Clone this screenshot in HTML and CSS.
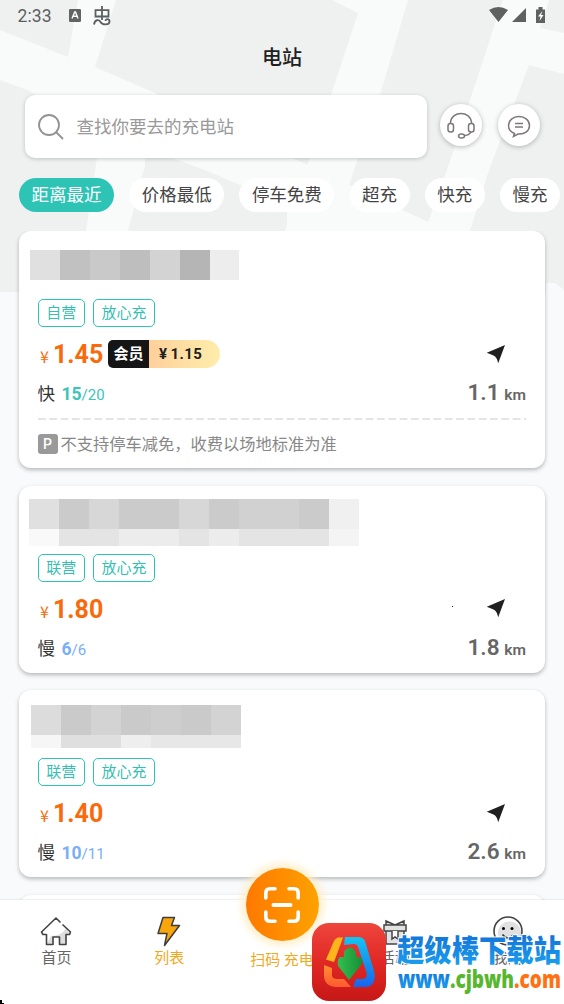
FILE: index.html
```html
<!DOCTYPE html>
<html lang="zh-CN">
<head>
<meta charset="utf-8">
<title>电站</title>
<link rel="stylesheet" href="styles.css">
</head>
<body>
<svg width="0" height="0" class="defs">
  <symbol id="nav-arrow" viewBox="0 0 20 20"><path d="M.800 8.700 19 1 12.200 19.200Q11 13 7.500 11.500Z" fill="#202020"/></symbol>
</svg>
<div class="app">
  <svg class="map" width="564" height="292" viewBox="0 0 564 292">
    <path fill="#eff1f1" d="M0 0H564V290L555 283H546V292H0Z"/>
    <g fill="#f9fbfb">
      <path d="M0 30 68 57 78 0H116L95 67 155 93 428 222 424 240H287V205L205 170 145 148V165L128 231H86L97 158 100 128 27 90 0 80Z"/>
      <path d="M332 0H408L380 95 354 170 335 231H285L331 95 358 13Z"/>
      <path d="M503 0H549L540 28 564 33V74L529 65 489 170 470 231H410L428 222 447 170 493 30Z"/>
    </g>
  </svg>
  <header class="status">
    <span class="clock">2:33</span>
    <svg class="a-badge" width="12" height="13" viewBox="0 0 12 13"><rect width="12" height="13" rx="1.2" fill="#626464"/><path d="M3 9.5 5.7 3H6.5L9 9.5M4.2 7.2H7.8" fill="none" stroke="#fff" stroke-width="1.4"/></svg>
    <svg class="glyph" width="19" height="20" viewBox="0 0 19 20" fill="none" stroke="#5c5f5f" stroke-width="1.8"><path d="M2.500 4.200H15.500V10.500H2.500ZM9 0V14M1 18.500C2 13 6 13.500 7.500 16 9.500 19.500 16.500 19 16.500 15.500 16.500 12.500 12.500 12.500 12.500 15"/></svg>
    <div class="signals">
      <svg width="58" height="18" viewBox="0 0 58 18" fill="#5f6161"><path d="M0 4Q9.500-2 19 4L9.500 16ZM37 2V16H23ZM47 3.500H49.500V1H53.500V3.500H56V17H47Z"/><path d="M53.500 5 49 10.500H51.500L50.500 15 54.500 9H52Z" fill="#fff"/></svg>
    </div>
  </header>
  <h1 class="title">电站</h1>
  <div class="search-row">
    <div class="search">
      <svg width="28" height="28" viewBox="0 0 28 28" fill="none" stroke="#929292" stroke-width="1.800"><circle cx="12" cy="12" r="10"/><path d="M19 19 26 26"/></svg>
      <span>查找你要去的充电站</span>
    </div>
    <div class="round"><svg width="28" height="28" viewBox="0 0 28 28" fill="none" stroke="#7d7777" stroke-width="1.500"><path d="M3.500 13V11C5-.500 23-.500 24.500 11V13M24 21Q22 24.500 17 24.500"/><rect x="1" y="12.500" width="5.500" height="8.500" rx="2.500"/><rect x="21.500" y="12.500" width="5.500" height="8.500" rx="2.500"/><ellipse cx="14.500" cy="25" rx="3" ry="2"/></svg></div>
    <div class="round"><svg width="28" height="28" viewBox="0 0 28 28" fill="none" stroke="#7d7777" stroke-width="1.500"><path d="M9.500 22.500 8.500 25.500 13 23C20 23.500 24.500 19.500 24.500 14.500S20 5.500 14 5.500 3.500 9.500 3.500 14.500C3.500 18 5.500 21 9.500 22.500ZM10 12.500H18M10 16H18"/></svg></div>
  </div>
  <div class="filters">
    <span class="chip on">距离最近</span><span class="chip">价格最低</span><span class="chip">停车免费</span><span class="chip">超充</span><span class="chip">快充</span><span class="chip">慢充</span>
  </div>
  <main class="list">
    <article class="card">
      <div class="name n1"><svg width="209" height="30" shape-rendering="crispEdges"><path fill="#e0e0e0" d="M0 0h30v30H0z"/><path fill="#c1c1c1" d="M30 0h30v30H30z"/><path fill="#c9c9c9" d="M60 0h30v30H60z"/><path fill="#bebebe" d="M90 0h30v30H90z"/><path fill="#d3d3d3" d="M120 0h30v30h-30z"/><path fill="#b5b5b5" d="M150 0h30v30h-30z"/><path fill="#ededed" d="M180 0h29v30h-29z"/></svg></div>
      <div class="tags"><span>自营</span><span>放心充</span></div>
      <div class="price-row"><span class="yen">¥</span><b class="price">1.45</b><span class="vip"><b>会员</b><strong><i>¥</i>1.15</strong></span><svg class="go" width="20" height="20"><use href="#nav-arrow"/></svg></div>
      <div class="stat"><span class="kind">快</span><span class="count fast"><b>15</b>/20</span><span class="dist"><b>1.1</b> km</span></div>
      <svg class="dash" width="488" height="2"><path d="M0 1H488" stroke="#dbdbdb" stroke-width="1.500" stroke-dasharray="7.800 3.500"/></svg>
      <div class="note"><i>P</i><span>不支持停车减免，收费以场地标准为准</span></div>
    </article>
    <article class="card">
      <div class="name n2"><svg width="330" height="47" shape-rendering="crispEdges"><path fill="#e0e0e0" d="M0 0h30v30H0z"/><path fill="#cbcbcb" d="M30 0h270v30H30z"/><path fill="#d7d7d7" d="M60 0h30v30H60zM150 0h30v30h-30z"/><path fill="#d1d1d1" d="M210 0h60v30h-60z"/><path fill="#f0f0f0" d="M300 0h30v30h-30z"/><path fill="#f9f9f9" d="M0 30h30v17H0z"/><path fill="#e4e4e4" d="M30 30h270v17H30z"/><path fill="#ececec" d="M90 30h60v17H90zM180 30h30v17h-30z"/><path fill="#f4f4f4" d="M300 30h30v17h-30z"/></svg></div>
      <div class="tags"><span>联营</span><span>放心充</span></div>
      <div class="price-row"><span class="yen">¥</span><b class="price">1.80</b><i class="speck"></i><svg class="go" width="20" height="20"><use href="#nav-arrow"/></svg></div>
      <div class="stat"><span class="kind">慢</span><span class="count slow"><b>6</b>/6</span><span class="dist"><b>1.8</b> km</span></div>
    </article>
    <article class="card">
      <div class="name n3"><svg width="210" height="43" shape-rendering="crispEdges"><path fill="#dcdcdc" d="M0 0h30v30H0z"/><path fill="#cacaca" d="M30 0h180v30H30z"/><path fill="#d3d3d3" d="M60 0h30v30H60zM180 0h30v30h-30z"/><path fill="#cecece" d="M120 0h30v30h-30z"/><path fill="#f6f6f6" d="M0 30h30v13H0z"/><path fill="#dfdfdf" d="M30 30h60v13H30z"/><path fill="#eee" d="M90 30h30v13H90z"/><path fill="#e7e7e7" d="M120 30h90v13h-90z"/></svg></div>
      <div class="tags"><span>联营</span><span>放心充</span></div>
      <div class="price-row"><span class="yen">¥</span><b class="price">1.40</b><svg class="go" width="20" height="20"><use href="#nav-arrow"/></svg></div>
      <div class="stat"><span class="kind">慢</span><span class="count slow"><b>10</b>/11</span><span class="dist"><b>2.6</b> km</span></div>
    </article>
    <article class="card"></article>
  </main>
  <nav class="tabs">
    <div class="tab"><svg width="32" height="32" viewBox="0 0 32 32"><path d="M16 2 30.500 16 28 19H26V28.500H19.500V21H13.500V28.500H6.500V19H3.500L1.500 16Z" fill="#fff"/><path d="M26 12Q22 20 11 20L6.500 28.500H13.500V21H19.500V28.500H26V18.500H30Z" fill="#dedede"/><path d="M20.500 6.500 16 2 1.500 16 3 18.500H6.500V28.500H13V21H19.500V28.500H26V18.500H29.500L30.500 16 22.500 8.500" fill="none" stroke="#444" stroke-width="1.600" stroke-linejoin="round"/></svg><span>首页</span></div>
    <div class="tab on"><svg width="32" height="32" viewBox="0 0 32 32"><path d="M10 1.500H21.500L18.500 9.500H26.500L11.500 29.500 14 17.500H5Z" fill="#f9a50c" stroke="#3d3d3d" stroke-width="1.500" stroke-linejoin="round"/></svg><span>列表</span></div>
    <div class="tab scan"><div class="fab"><svg width="40" height="40" viewBox="0 0 40 40" fill="none" stroke="#fff" stroke-width="3.600" stroke-linecap="round"><path d="M3.800 13V8Q3.800 3.800 8 3.800H13M27 3.800H32Q36.200 3.800 36.200 8V13M36.200 27V32Q36.200 36.200 32 36.200H27M13 36.200H8Q3.800 36.200 3.800 32V27"/><path d="M11.500 20H28.500" stroke-width="4"/></svg></div><span>扫码 充电</span></div>
    <div class="tab"><svg width="32" height="32" viewBox="0 0 32 32" fill="#e2e2e2" stroke="#444" stroke-width="1.500"><path d="M7 15H25V28H7ZM5 9H27V15H5ZM16 9 7 5V9ZM16 9 25 5V9Z"/><path d="M13 15V23L16 21 19 23V15" fill="#fff"/></svg><span>活动</span></div>
    <div class="tab"><svg width="32" height="32" viewBox="0 0 32 32"><circle cx="16" cy="15" r="14" fill="#fff" stroke="#444" stroke-width="1.600"/><circle cx="17.500" cy="17" r="11.500" fill="#e1e1e1"/><path d="M10.500 18.500Q16 25.500 21.500 18.500" fill="none" stroke="#333" stroke-width="1.500"/><circle cx="11.500" cy="12.500" r="1.500"/><circle cx="20" cy="12.500" r="1.500"/></svg><span>我的</span></div>
  </nav>
  <div class="watermark">
    <svg width="74" height="78" viewBox="0 0 74 78">
      <defs><linearGradient id="red" x2="0" y2="1"><stop stop-color="#ee463c"/><stop offset=".5" stop-color="#e02824"/><stop offset="1" stop-color="#c71717"/></linearGradient><linearGradient id="blue" x2="0" y2="1"><stop stop-color="#13c5f1"/><stop offset="1" stop-color="#1764ec"/></linearGradient><linearGradient id="org" x2="0" y2="1"><stop stop-color="#ff8e32"/><stop offset="1" stop-color="#ff5a2f"/></linearGradient><linearGradient id="grn"><stop stop-color="#35bd4e"/><stop offset="1" stop-color="#159139"/></linearGradient></defs>
      <rect width="74" height="78" rx="17" fill="url(#red)"/>
      <path d="M26 14.500H31L22 39 14 36.500 22 18Q23.500 15 26 14.500Z" fill="#ffb51b"/>
      <path d="M33 14H46Q51 14 53 18L62 48Q65 60 56 64H41L44 56H52Q56 54 54 48L46 24Q45 21 42 21L32 22Z" fill="url(#blue)"/>
      <path d="M12 42 20 45 20 53Q21 56 25 56H32L39 64H23Q13 63 12 54Z" fill="url(#org)"/>
      <path d="M32 29Q38 20 44 29V34H48Q52 37 49 42L37 57 26 43Q25 36 28 34H32Z" fill="url(#grn)"/>
    </svg>
    <svg class="wm-text" width="178" height="78">
      <defs><linearGradient id="sky" x2="0" y2="1"><stop offset=".2" stop-color="#1474d8"/><stop offset="1" stop-color="#1ba5f0"/></linearGradient></defs>
      <text class="wm-name" x="11" y="38" textLength="164" lengthAdjust="spacingAndGlyphs">超级棒下载站</text>
      <text class="wm-url" x="12" y="65" textLength="163" lengthAdjust="spacingAndGlyphs">www<tspan class="g">.cjbwh</tspan><tspan class="o">.com</tspan></text>
    </svg>
  </div>
  <svg class="corner" width="4" height="4"><path d="M0 0H2V3H4V4H0Z"/></svg>
</div>
</body>
</html>
```
FILE: styles.css
```css
* { box-sizing: border-box; }
body { margin: 0; font-family: Roboto, "Noto Sans CJK SC", sans-serif; }
.defs { position: absolute; }
.app { position: relative; isolation: isolate; width: 564px; height: 1004px; overflow: hidden; background: #f8fafc; display: flex; flex-direction: column; }
.map { position: absolute; z-index: -1; top: 0; left: 0; }
.status { height: 32px; flex: none; display: flex; align-items: center; padding: 0 17px 0 17.5px; }
.clock { width: 51px; font-size: 17.5px; color: #5c5f5f; letter-spacing: .1px; }
.a-badge { margin-top: -2px; }
.glyph { margin-left: 12px; margin-top: -1px; }
.signals { margin-left: auto; display: flex; margin-top: -2px; }
.title { margin: 0; height: 63px; flex: none; line-height: 53px; text-align: center; font-size: 20px; font-weight: 500; color: #202020; }
.search-row { height: 63px; flex: none; display: flex; align-items: center; gap: 16px; padding: 0 24px 0 25px; }
.search { flex: 1; height: 63px; border-radius: 10px; background: #fff; box-shadow: 0 1px 4px #0003; display: flex; align-items: center; gap: 11.5px; padding-left: 12px; margin-right: -3px; font-size: 17.5px; line-height: 24px; color: #999; }
.search span { margin-top: 0; }
.round { width: 42px; height: 42px; border-radius: 50%; background: #fff; box-shadow: 0 1px 5px #0004; display: grid; place-items: center; margin-top: -3px; flex: none; }
.filters { height: 34px; flex: none; margin: 20px 0 19px 19px; display: flex; gap: 15.2px; }
.chip { flex: none; padding: 0 12.5px; border-radius: 17px; background: #fff; color: #444; font-size: 17.5px; line-height: 34px; white-space: nowrap; }
.chip.on { background: #2dc4b6; color: #fff; }
.list { flex: 1; min-height: 0; overflow: hidden; display: flex; flex-direction: column; gap: 17.500px; padding: 0 19px 0; }
.card { flex: none; height: 187px; padding: 0 19px; border-radius: 12px; background: #fff; box-shadow: 0 2px 4px #0004; }
.card:first-child { height: 237px; }
.name { height: 68px; margin: 0 -19px; }
.name svg { display: block; }
.n1 { padding: 19px 0 0 11px; }
.n2 { padding: 13px 0 0 10px; }
.n3 { padding: 15px 0 0 12px; }
.tags { display: flex; gap: 8px; height: 28px; margin-left: -.5px; }
.tags span { border: 1.5px solid #2dc4b6; border-radius: 5px; padding: 0 7.7px; line-height: 26px; font-size: 15px; color: #36bfb0; }
.price-row { height: 54px; display: flex; align-items: center; color: #f96a0b; position: relative; }
.yen { width: 15px; padding-left: 2px; font: 16px "Noto Sans CJK SC", sans-serif; margin-top: 4px; }
.price { width: 55px; font-size: 25px; line-height: 28px; margin-top: 2px; }
.vip { height: 28px; display: flex; border-radius: 5px 14px 14px 5px; overflow: hidden; color: #fff; font-size: 15px; line-height: 28px; }
.vip b { width: 41px; text-align: center; background: #151515; }
.vip strong { width: 71px; padding-left: 10px; background: linear-gradient(90deg, #ffd09c, #ffedaa); color: #202020; letter-spacing: .4px; white-space: nowrap; line-height: 28px; }
.vip i { font-style: normal; margin-right: 3px; }
.go { margin-left: auto; margin-right: 20px; margin-top: -1px; }
.speck { position: absolute; left: 414px; top: 24px; width: 1px; height: 1px; background: #600; }
.stat { height: 27px; display: flex; align-items: baseline; line-height: 23px; margin-left: -.5px; }
.kind { width: 24px; font-size: 17.5px; color: #333; }
.count { font-size: 15px; }
.count b { font-size: 17.500px; }
.fast { color: #3cc4b8; }
.slow { color: #7aaef5; }
.dist { margin-left: auto; font-size: 15.5px; font-weight: 600; color: #666; }
.dist b { font-size: 22.5px; font-weight: 600; margin-right: 1px; }
.dash { display: block; margin-top: 10px; }
.note { height: 20px; margin-top: 14px; display: flex; align-items: center; gap: 3px; margin-left: -.5px; color: #888; font-size: 16.250px; line-height: 22px; white-space: nowrap; }
.note span { margin-top: 1px; }
.note i { width: 20px; height: 20px; border-radius: 3px; background: #999; color: #fff; font: 500 14px/21px Roboto, sans-serif; text-align: center; }
.tabs { height: 104px; flex: none; background: #fff; display: flex; box-shadow: 0 -1px 1px #0000000d; }
.tab { width: 112.8px; display: flex; flex-direction: column; align-items: center; padding-top: 16px; position: relative; font-size: 15px; color: #666; }
.tab span { line-height: 21px; white-space: nowrap; }
.tab.on, .scan { color: #f1a91c; }
.scan { padding-top: 50px; }
.fab { position: absolute; top: -32px; left: 20px; width: 73px; height: 73px; border-radius: 50%; background: linear-gradient(90deg, #ff7900, #fda200); box-shadow: 0 0 8px 4px #ffedc5; display: grid; place-items: center; }
.watermark { position: absolute; left: 312px; top: 923px; display: flex; }
.wm-text text { paint-order: stroke fill; stroke: #fff; stroke-width: 2px; fill: url(#sky); }
.wm-text .wm-name { font: 900 30px "Noto Sans CJK SC", sans-serif; }
.wm-text .wm-url { font: 800 25px "Open Sans", sans-serif; }
.wm-text .g { fill: #58b72e; }
.wm-text .o { fill: #ff7214; }
.corner { position: absolute; left: 0; bottom: 0; }
```
